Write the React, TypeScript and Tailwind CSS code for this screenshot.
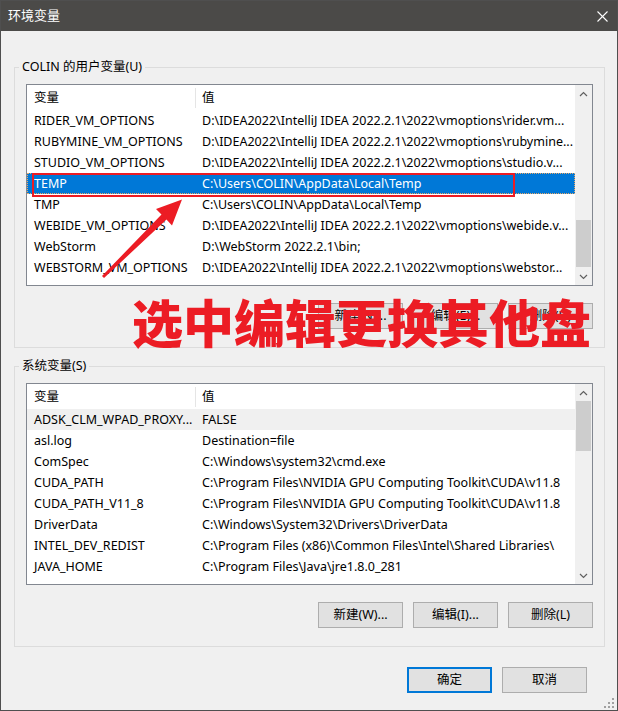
import type { ReactNode } from "react";

type Row = [string, string];

const userRows: Row[] = [
  ["RIDER_VM_OPTIONS", "D:\\IDEA2022\\IntelliJ IDEA 2022.2.1\\2022\\vmoptions\\rider.vm..."],
  ["RUBYMINE_VM_OPTIONS", "D:\\IDEA2022\\IntelliJ IDEA 2022.2.1\\2022\\vmoptions\\rubymine..."],
  ["STUDIO_VM_OPTIONS", "D:\\IDEA2022\\IntelliJ IDEA 2022.2.1\\2022\\vmoptions\\studio.v..."],
  ["TEMP", "C:\\Users\\COLIN\\AppData\\Local\\Temp"],
  ["TMP", "C:\\Users\\COLIN\\AppData\\Local\\Temp"],
  ["WEBIDE_VM_OPTIONS", "D:\\IDEA2022\\IntelliJ IDEA 2022.2.1\\2022\\vmoptions\\webide.v..."],
  ["WebStorm", "D:\\WebStorm 2022.2.1\\bin;"],
  ["WEBSTORM_VM_OPTIONS", "D:\\IDEA2022\\IntelliJ IDEA 2022.2.1\\2022\\vmoptions\\webstor..."],
];

const systemRows: Row[] = [
  ["ADSK_CLM_WPAD_PROXY...", "FALSE"],
  ["asl.log", "Destination=file"],
  ["ComSpec", "C:\\Windows\\system32\\cmd.exe"],
  ["CUDA_PATH", "C:\\Program Files\\NVIDIA GPU Computing Toolkit\\CUDA\\v11.8"],
  ["CUDA_PATH_V11_8", "C:\\Program Files\\NVIDIA GPU Computing Toolkit\\CUDA\\v11.8"],
  ["DriverData", "C:\\Windows\\System32\\Drivers\\DriverData"],
  ["INTEL_DEV_REDIST", "C:\\Program Files (x86)\\Common Files\\Intel\\Shared Libraries\\"],
  ["JAVA_HOME", "C:\\Program Files\\Java\\jre1.8.0_281"],
];

function Chevron({ up }: { up?: boolean }) {
  return (
    <svg width="9" height="6" viewBox="0 0 9 6" fill="none" stroke="#606060" strokeWidth="1.2">
      {up ? <polyline points="1,5 4.5,1.5 8,5" /> : <polyline points="1,1 4.5,4.5 8,1" />}
    </svg>
  );
}

function Scrollbar({ thumbClass }: { thumbClass: string }) {
  return (
    <div className="w-[17px] shrink-0 flex flex-col bg-[#f0f0f0]">
      <div className="h-[17px] flex items-center justify-center">
        <Chevron up />
      </div>
      <div className="flex-1 flex flex-col items-center">
        <div className={`w-[15px] bg-[#cdcdcd] ${thumbClass}`} />
      </div>
      <div className="h-[17px] flex items-center justify-center">
        <Chevron />
      </div>
    </div>
  );
}

function ListBox({
  rows,
  thumbClass,
  selected,
  inactive,
  children,
}: {
  rows: Row[];
  thumbClass: string;
  selected?: number;
  inactive?: number;
  children?: ReactNode;
}) {
  return (
    <div className="relative w-[567px] h-[202px] border border-[#828790] bg-white flex text-[12.5px]">
      <div className="flex-1 min-w-0 overflow-hidden">
        <div className="h-[25px] flex items-center pt-px">
          <div className="w-[168px] shrink-0 pl-[7px]">变量</div>
          <div className="w-px h-[20px] shrink-0 bg-[#e5e5e5]" />
          <div className="pl-[6px]">值</div>
        </div>
        {rows.map(([name, value], i) => {
          let rowCls = "text-black";
          if (i === selected) rowCls = "bg-[#0078d7] text-white outline outline-1 outline-dotted outline-offset-[-1px] outline-[#e8a868]";
          else if (i === inactive) rowCls = "bg-[#f0f0f0] text-black";
          return (
            <div key={name} className={`h-[21px] pt-px flex items-center whitespace-nowrap ${rowCls}`}>
              <div className="w-[168px] shrink-0 pl-[7px] overflow-hidden">{name}</div>
              <div className="flex-1 min-w-0 pl-[7px] overflow-hidden">{value}</div>
            </div>
          );
        })}
      </div>
      <Scrollbar thumbClass={thumbClass} />
      {children}
    </div>
  );
}

function Btn({ label, primary }: { label: string; primary?: boolean }) {
  return (
    <button
      className={`w-[85px] h-[26px] bg-[#e1e1e1] text-black text-[12.5px] ${
        primary ? "border-2 border-[#0078d7]" : "border border-[#adadad]"
      }`}
    >
      {label}
    </button>
  );
}

function Group({ title, children }: { title: string; children: ReactNode }) {
  return (
    <div className="relative w-[591px] border border-[#dcdcdc] pt-[16px] pl-[11px] pb-[18px]">
      <span className="absolute left-[4px] top-[-10px] px-[3px] leading-[18px] bg-[#f0f0f0]">{title}</span>
      {children}
    </div>
  );
}

export default function App() {
  return (
    <div
      className="relative w-[618px] h-[711px] bg-[#f0f0f0] border border-[#4f4f4f] flex flex-col overflow-hidden text-[12.5px] text-black"
      style={{ fontFamily: '"Noto Sans", "Noto Sans CJK SC", sans-serif' }}
    >
      {/* Title bar */}
      <div className="h-[30px] bg-[#4b4a48] flex items-center justify-between pl-[7px] pr-[9px] text-white">
        <span className="text-[13px]">环境变量</span>
        <svg width="11" height="11" viewBox="0 0 11 11" stroke="#ffffff" strokeWidth="1.1">
          <line x1="0.5" y1="0.5" x2="10.5" y2="10.5" />
          <line x1="10.5" y1="0.5" x2="0.5" y2="10.5" />
        </svg>
      </div>

      <div className="pl-[13px] flex flex-col">
        {/* User variables */}
        <div className="mt-[36px]">
          <Group title="COLIN 的用户变量(U)">
            <ListBox rows={userRows} thumbClass="mt-[118px] h-[47px]" selected={3}>
              <div className="absolute left-[5px] top-[88px] w-[483px] h-[24px] border-2 border-[#ec1c24]" />
            </ListBox>
            <div className="mt-[17px] w-[567px] flex justify-end gap-[10px]">
              <Btn label="新建(N)..." />
              <Btn label="编辑(E)..." />
              <Btn label="删除(D)" />
            </div>
          </Group>
        </div>

        {/* System variables */}
        <div className="mt-[18px]">
          <Group title="系统变量(S)">
            <ListBox rows={systemRows} thumbClass="h-[50px]" inactive={0} />
            <div className="mt-[17px] w-[567px] flex justify-end gap-[10px]">
              <Btn label="新建(W)..." />
              <Btn label="编辑(I)..." />
              <Btn label="删除(L)" />
            </div>
          </Group>
        </div>
      </div>

      {/* Dialog buttons */}
      <div className="mt-[20px] pr-[30px] flex justify-end gap-[10px]">
        <Btn label="确定" primary />
        <Btn label="取消" />
      </div>

      {/* Annotation overlay */}
      <div
        className="absolute left-[131px] top-[295px] text-[51px] leading-[51px] font-black text-[#ec1c24] whitespace-nowrap"
        style={{ fontFamily: '"Noto Sans CJK SC", sans-serif' }}
      >
        选中编辑更换其他盘
      </div>
      <svg className="absolute left-0 top-0 pointer-events-none" width="618" height="711">
        <polygon
          fill="#ec1c24"
          points="101,275 160.5,213.5 155,208 181,198.5 171,224.5 165.5,218.5 103,277"
        />
      </svg>

      {/* Resize grip */}
      <svg className="absolute right-[3px] bottom-[2px]" width="10" height="10" viewBox="0 0 10 10" fill="#a0a0a0">
        <rect x="8" y="0" width="2" height="2" />
        <rect x="4" y="4" width="2" height="2" />
        <rect x="8" y="4" width="2" height="2" />
        <rect x="0" y="8" width="2" height="2" />
        <rect x="4" y="8" width="2" height="2" />
        <rect x="8" y="8" width="2" height="2" />
      </svg>
    </div>
  );
}
